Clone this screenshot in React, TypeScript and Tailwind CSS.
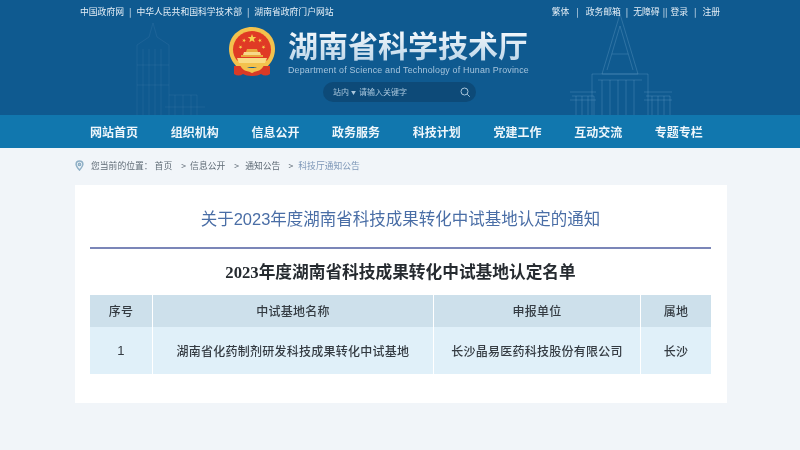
import React from "react";

const cjk = { fontFamily: '"Noto Sans CJK SC", "Liberation Sans", sans-serif' };
const mixed = { fontFamily: '"Liberation Sans", "Noto Sans CJK SC", sans-serif' };
const serif = { fontFamily: '"Liberation Serif", "Noto Sans CJK SC", serif' };

function Emblem() {
  const star = (x: number, y: number, r: number, rot = 0) => {
    const pts: string[] = [];
    for (let i = 0; i < 10; i++) {
      const a = (-90 + rot + i * 36) * (Math.PI / 180);
      const rr = i % 2 === 0 ? r : r * 0.42;
      pts.push(`${(x + rr * Math.cos(a)).toFixed(2)},${(y + rr * Math.sin(a)).toFixed(2)}`);
    }
    return <polygon key={`${x}-${y}`} points={pts.join(" ")} fill="#f6d04d" />;
  };
  return (
    <svg width="46" height="50" viewBox="0 0 46 50" className="shrink-0">
      <path d="M23 0C10 0 0 9.500 0 22c0 7 3 13 8 18h30c5-5 8-11 8-18C46 9.500 36 0 23 0Z" fill="#f3c24d" />
      <path d="M23 4C12.500 4 4 12.500 4 22.500c0 4 1.500 8 4 11h30c2.500-3 4-7 4-11C42 12.500 33.500 4 23 4Z" fill="#e03a25" />
      {star(23, 11.500, 4.500)}
      {star(15, 13.500, 2, 20)}
      {star(31, 13.500, 2, -20)}
      {star(11.500, 20, 2, 40)}
      {star(34.500, 20, 2, -40)}
      <path d="M18 22h10l1 3H17Z" fill="#e9a83c" />
      <path d="M15 25h16l1 3H14Z" fill="#f7d98a" />
      <path d="M12 28h22v2H12Z" fill="#e9a83c" />
      <path d="M8 31h30l-2 5H10Z" fill="#f8dc84" />
      <path d="M5 39h9c2 2 5 3 9 3s7-1 9-3h9v8c-3 2-6 2-9 0-2 1-5 2-9 2s-7-1-9-2c-3 2-6 2-9 0Z" fill="#d93a26" />
      <path d="M13 36c2 3 6 5 10 5s8-2 10-5l2 2c-2 5-7 7-12 7s-10-2-12-7Z" fill="#f3c24d" />
      <circle cx="23" cy="44" r="2" fill="#f3c24d" />
    </svg>
  );
}

function TowerLeft() {
  return (
    <svg width="100" height="100" viewBox="0 0 100 100" fill="none" stroke="#6f9fc4" strokeOpacity="0.14" className="absolute left-[125px] top-[15px]">
      <path d="M12 100V30l12-8 4-14 4 14 12 8v70M18 34v66M24 34v66M30 34v66M36 34v66M12 50h32M12 70h32" />
      <path d="M44 80h28v20M50 80v20M58 80v20M66 80v20M40 92h40" />
    </svg>
  );
}

function TowerRight() {
  return (
    <svg width="110" height="105" viewBox="0 0 110 105" fill="none" stroke="#7fb0d4" strokeOpacity="0.28" className="absolute left-[568px] top-[12px]">
      <path d="M52 2 34 62h36L52 2ZM44 42h16M39 58l13-44 13 44" />
      <path d="M24 62h56v43H24ZM30 68h44M34 68v37M42 68v37M50 68v37M58 68v37M66 68v37" />
      <path d="M4 84h22v21M8 84v21M14 84v21M20 84v21M78 84h24v21M84 84v21M90 84v21M96 84v21" />
      <path d="M2 80h26M76 80h28M2 88h26M76 88h28" />
    </svg>
  );
}

const navItems = ["网站首页", "组织机构", "信息公开", "政务服务", "科技计划", "党建工作", "互动交流", "专题专栏"];

export default function App() {
  return (
    <div className="w-[800px] h-[450px] overflow-hidden bg-[#f1f5f9] blur-[0.5px]" style={cjk}>
      <header className="relative h-[115px] bg-[#0f5a90] overflow-hidden">
        <TowerLeft />
        <TowerRight />
        <div className="relative flex flex-col items-center">
          <div className="w-[640px] h-[24px] flex items-center justify-between text-[8.800px] text-[#e4eef6]">
            <div className="flex items-center">
              <span>中国政府网</span>
              <span className="mx-[5px]">|</span>
              <span>中华人民共和国科学技术部</span>
              <span className="mx-[5px]">|</span>
              <span>湖南省政府门户网站</span>
            </div>
            <div className="flex items-center">
              <span>繁体</span>
              <span className="mx-[7px]">|</span>
              <span>政务邮箱</span>
              <span className="mx-[5px]">|</span>
              <span>无障碍</span>
              <span className="mx-[3px]">||</span>
              <span>登录</span>
              <span className="mx-[6px]">|</span>
              <span>注册</span>
            </div>
          </div>
          <div className="flex items-start h-[54px] mt-[3px] ml-[-42px]">
            <Emblem />
            <div className="ml-[13px] flex flex-col">
              <div className="text-[30px] leading-[38px] font-bold bg-gradient-to-b from-white to-[#b9d4e8] bg-clip-text text-transparent mt-[-2px]">湖南省科学技术厅</div>
              <div className="text-[8.900px] leading-[11px] text-[#a5c4dd] tracking-[0.2px] mt-[2px]" style={mixed}>Department of Science and Technology of Hunan Province</div>
            </div>
          </div>
          <div className="ml-[-1px] mt-[1px] w-[153px] h-[20px] rounded-full bg-[#0d4a78] flex items-center pl-[10px] pr-[5px] text-[8px] text-[#a9c6dc]">
            <span>站内</span>
            <span className="ml-[2px] text-[5px]">▼</span>
            <span className="ml-[3px]">请输入关键字</span>
            <svg width="12" height="12" viewBox="0 0 24 24" fill="none" stroke="#a9c6dc" strokeWidth="2" className="ml-auto">
              <circle cx="11" cy="11" r="7" />
              <path d="m16.500 16.500 5 5" />
            </svg>
          </div>
        </div>
      </header>

      <nav className="h-[33px] bg-[#1177ae] flex items-center justify-center">
        <div className="w-[640px] flex pl-[10px] text-[12px] font-bold text-[#eef6fb] gap-[32.700px]">
          {navItems.map((n) => (
            <span key={n} className="w-[48px] whitespace-nowrap">{n}</span>
          ))}
        </div>
      </nav>

      <main className="w-[652px] ml-[75px]">
        <div className="h-[37px] flex items-center text-[8.800px] text-[#5f6b76] pb-[2px]">
          <svg width="9" height="11" viewBox="0 0 24 28" fill="none" stroke="#8fb0c6" strokeWidth="4" className="mr-[7px] shrink-0">
            <path d="M12 26C6 19 3 15 3 11a9 9 0 0 1 18 0c0 4-3 8-9 15Z" />
            <circle cx="12" cy="11" r="3" />
          </svg>
          <span>您当前的位置：</span>
          <span className="ml-[2px]">首页</span>
          <span className="ml-[9px]">&gt;</span>
          <span className="ml-[4px]">信息公开</span>
          <span className="ml-[9px]">&gt;</span>
          <span className="ml-[6px]">通知公告</span>
          <span className="ml-[8px]">&gt;</span>
          <span className="ml-[5px] text-[#7f98b8]">科技厅通知公告</span>
        </div>

        <section className="h-[218px] bg-white pl-[15px] pr-[16px] flex flex-col">
          <h1 className="h-[64px] pt-[6px] flex items-center justify-center text-[16.500px] text-[#4a6ea6] border-b-2 border-[#7b86b8]" style={mixed}>
            关于2023年度湖南省科技成果转化中试基地认定的通知
          </h1>
          <h2 className="h-[46px] pt-[2px] flex items-center justify-center text-[16.700px] font-bold text-[#262b30]" style={serif}>
            2023年度湖南省科技成果转化中试基地认定名单
          </h2>
          <div className="grid grid-cols-[62px_280px_206px_70px] gap-x-[1px] grid-rows-[32px_47px] text-[12px] font-medium tracking-[0.25px] text-[#343b42] text-center">
            <div className="bg-[#cde0eb] flex items-center justify-center">序号</div>
            <div className="bg-[#cde0eb] flex items-center justify-center">中试基地名称</div>
            <div className="bg-[#cde0eb] flex items-center justify-center">申报单位</div>
            <div className="bg-[#cde0eb] flex items-center justify-center">属地</div>
            <div className="bg-[#e0f0f9] flex items-center justify-center text-[13px]" style={mixed}>1</div>
            <div className="bg-[#e0f0f9] flex items-center justify-center">湖南省化药制剂研发科技成果转化中试基地</div>
            <div className="bg-[#e0f0f9] flex items-center justify-center">长沙晶易医药科技股份有限公司</div>
            <div className="bg-[#e0f0f9] flex items-center justify-center">长沙</div>
          </div>
        </section>
      </main>
    </div>
  );
}
